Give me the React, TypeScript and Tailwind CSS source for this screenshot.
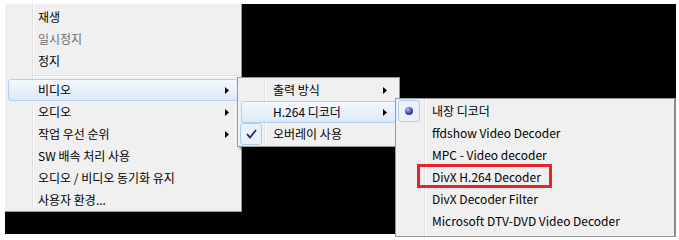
type Item = {
  label?: string;
  sep?: boolean;
  disabled?: boolean;
  sub?: boolean;
  hot?: boolean;
  check?: boolean;
  radio?: boolean;
};

const mainItems: Item[] = [
  { label: "재생" },
  { label: "일시정지", disabled: true },
  { label: "정지" },
  { sep: true },
  { label: "비디오", sub: true, hot: true },
  { label: "오디오", sub: true },
  { label: "작업 우선 순위", sub: true },
  { label: "SW 배속 처리 사용" },
  { label: "오디오 / 비디오 동기화 유지" },
  { label: "사용자 환경..." },
];

const videoItems: Item[] = [
  { label: "출력 방식", sub: true },
  { label: "H.264 디코더", sub: true, hot: true },
  { label: "오버레이 사용", check: true },
];

const decoderItems: Item[] = [
  { label: "내장 디코더", radio: true },
  { label: "ffdshow Video Decoder" },
  { label: "MPC - Video decoder" },
  { label: "DivX H.264 Decoder" },
  { label: "DivX Decoder Filter" },
  { label: "Microsoft DTV-DVD Video Decoder" },
];

const Arrow = () => (
  <svg width="4" height="7" viewBox="0 0 4 7" className="ml-auto mr-[8px] shrink-0">
    <path d="M0 0 L4 3.5 L0 7 Z" fill="#000" />
  </svg>
);

// icon frame used for the check mark and the radio bullet
const IconFrame = ({ children }: { children: React.ReactNode }) => (
  <div className="-ml-[2px] w-[22px] h-[22px] shrink-0 rounded-[3px] border border-[#aecbf0] bg-[#e9f1fb] flex items-center justify-center">
    {children}
  </div>
);

const Row = ({ item, slot }: { item: Item; slot: string }) => {
  if (item.sep) {
    return (
      <div className="h-[7px] flex flex-col justify-center pl-[28px]">
        <div className="h-px bg-[#e0e0e0]" />
        <div className="h-px bg-white" />
      </div>
    );
  }
  return (
    <div
      className={
        "mx-[3px] h-[22px] flex items-center rounded-[3px] border " +
        (item.hot
          ? "border-[#b3cff2] bg-[linear-gradient(to_bottom,#f4f8fd,#dde9f8)]"
          : "border-transparent")
      }
    >
      <div className={slot + " h-full shrink-0 flex items-center"}>
        {item.check && (
          <IconFrame>
            <svg width="11" height="10" viewBox="0 0 11 10">
              <path d="M1 5 L4 8.5 L10 1" fill="none" stroke="#1e2a78" strokeWidth="1.8" />
            </svg>
          </IconFrame>
        )}
        {item.radio && (
          <IconFrame>
            <div className="w-[8px] h-[8px] rounded-full bg-[radial-gradient(circle_at_35%_30%,#b4b8f2,#3b3fa0_60%,#1c1f66)]" />
          </IconFrame>
        )}
      </div>
      <span className={"whitespace-nowrap " + (item.disabled ? "text-[#6d6d6d]" : "text-black")}>
        {item.label}
      </span>
      {item.sub && <Arrow />}
    </div>
  );
};

export default function App() {
  return (
    <div
      className="w-[679px] h-[240px] bg-white pt-[4px] pl-[5px] overflow-hidden text-[12px] leading-none"
      style={{ fontFamily: '"Noto Sans CJK KR", "Noto Sans", sans-serif' }}
    >
      <div className="relative w-[671px] h-[230px] bg-black">
        {/* main menu */}
        <div className="absolute left-0 top-0 w-[237px] h-[208px] flex flex-col pt-[2px] border-r border-b border-[#979797] bg-[linear-gradient(to_right,#f0f0f0_27px,#e0e0e0_27px,#e0e0e0_28px,#ffffff_28px,#ffffff_29px,#f0f0f0_29px)]">
          {mainItems.map((it, i) => (
            <Row key={i} item={it} slot="w-[29px]" />
          ))}
        </div>

        {/* video submenu */}
        <div className="absolute left-[232px] top-[73px] w-[163px] h-[70px] flex flex-col pt-[1px] border border-[#979797] shadow-[2px_2px_2px_rgba(0,0,0,0.35)] bg-[linear-gradient(to_right,#f0f0f0_26px,#e0e0e0_26px,#e0e0e0_27px,#ffffff_27px,#ffffff_28px,#f0f0f0_28px)]">
          {videoItems.map((it, i) => (
            <Row key={i} item={it} slot="w-[31px]" />
          ))}
        </div>

        {/* decoder submenu */}
        <div className="absolute left-[390px] top-[94px] w-[281px] h-[139px] flex flex-col pt-[1px] border border-[#979797] border-r-2 border-r-[#8a8a8a] bg-[linear-gradient(to_right,#f0f0f0_28px,#e0e0e0_28px,#e0e0e0_29px,#ffffff_29px,#ffffff_30px,#f0f0f0_30px)]">
          {decoderItems.map((it, i) => (
            <Row key={i} item={it} slot="w-[32px]" />
          ))}
          {/* red annotation box */}
          <div className="absolute left-[21px] top-[65px] w-[135px] h-[24px] border-[3px] border-[#e8242c]" />
        </div>
      </div>
    </div>
  );
}
